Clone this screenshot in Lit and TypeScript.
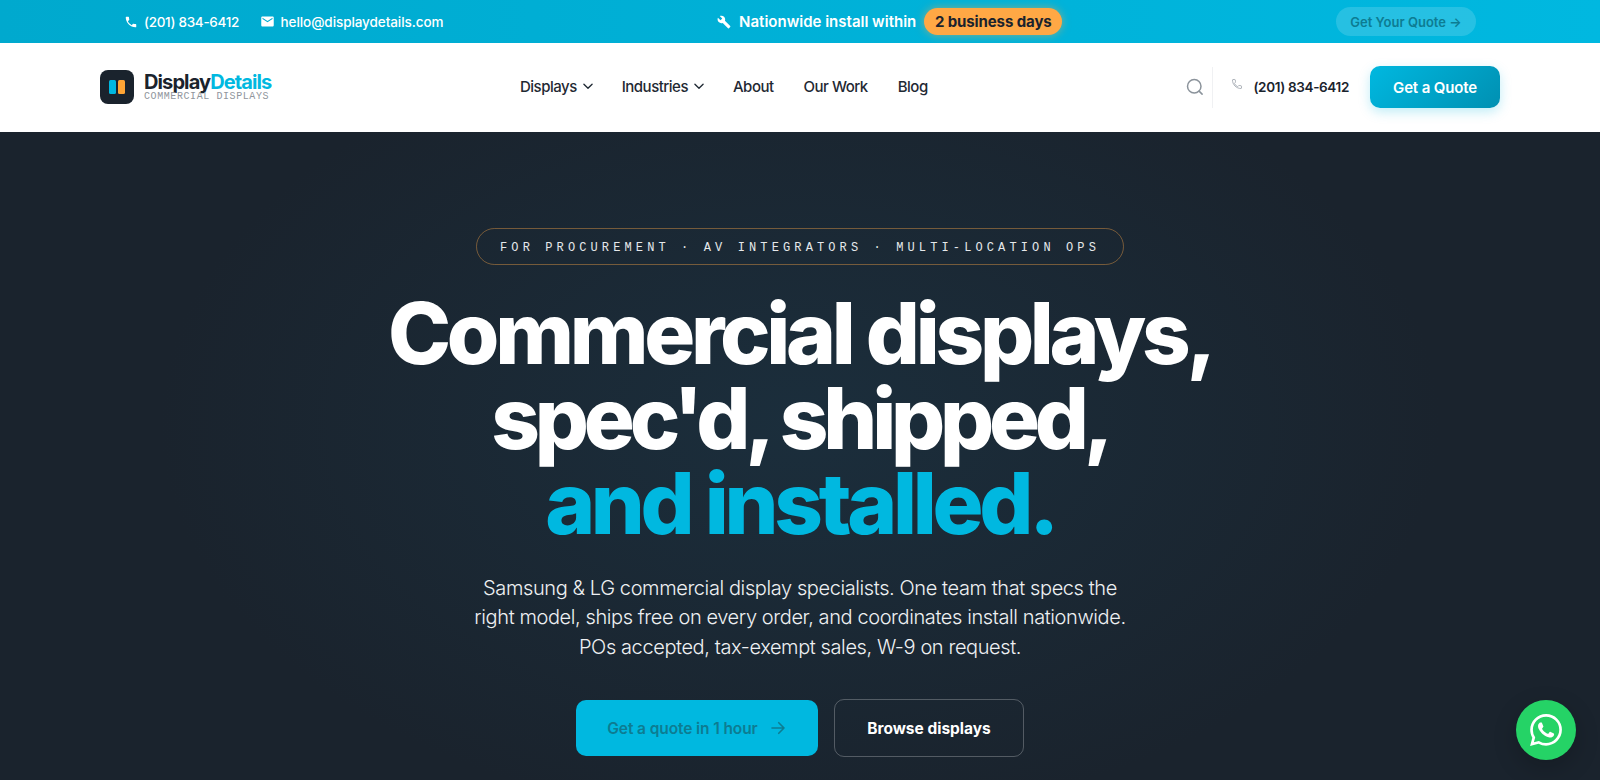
import { LitElement, html, css, svg } from "lit";
import { customElement } from "lit/decorators.js";

const PHONE = svg`<path d="M6.62 10.79c1.44 2.83 3.76 5.14 6.59 6.59l2.2-2.2c.27-.27.67-.36 1.02-.24 1.12.37 2.33.57 3.57.57.55 0 1 .45 1 1V20c0 .55-.45 1-1 1-9.39 0-17-7.61-17-17 0-.55.45-1 1-1h3.5c.55 0 1 .45 1 1 0 1.25.2 2.45.57 3.57.11.35.03.74-.25 1.02l-2.2 2.2z"/>`;
const MAIL = svg`<path d="M20 4H4c-1.1 0-1.99.9-1.99 2L2 18c0 1.1.9 2 2 2h16c1.1 0 2-.9 2-2V6c0-1.1-.9-2-2-2zm0 4l-8 5-8-5V6l8 5 8-5v2z"/>`;
const WRENCH = svg`<path d="M22.7 19l-9.1-9.1c.9-2.3.4-5-1.5-6.9-2-2-5-2.4-7.4-1.3L9 6 6 9 1.6 4.7C.4 7.1.9 10.1 2.9 12.1c1.9 1.9 4.6 2.4 6.9 1.5l9.1 9.1c.4.4 1 .4 1.4 0l2.3-2.3c.5-.4.5-1.1.1-1.4z"/>`;
const WA = svg`<path d="M17.472 14.382c-.297-.149-1.758-.867-2.03-.967-.273-.099-.471-.148-.67.15-.197.297-.767.966-.94 1.164-.173.199-.347.223-.644.075-.297-.15-1.255-.463-2.39-1.475-.883-.788-1.48-1.761-1.653-2.059-.173-.297-.018-.458.13-.606.134-.133.298-.347.446-.52.149-.174.198-.298.298-.497.099-.198.05-.371-.025-.52-.075-.149-.669-1.612-.916-2.207-.242-.579-.487-.5-.669-.51-.173-.008-.371-.01-.57-.01-.198 0-.52.074-.792.372-.272.297-1.04 1.016-1.04 2.479 0 1.462 1.065 2.875 1.213 3.074.149.198 2.096 3.2 5.077 4.487.709.306 1.262.489 1.694.625.712.227 1.36.195 1.871.118.571-.085 1.758-.719 2.006-1.413.248-.694.248-1.289.173-1.413-.074-.124-.272-.198-.57-.347m-5.421 7.403h-.004a9.87 9.87 0 01-5.031-1.378l-.361-.214-3.741.982.998-3.648-.235-.374a9.86 9.86 0 01-1.51-5.26c.001-5.45 4.436-9.884 9.888-9.884 2.64 0 5.122 1.03 6.988 2.898a9.825 9.825 0 012.893 6.994c-.003 5.45-4.437 9.884-9.885 9.884m8.413-18.297A11.815 11.815 0 0012.05 0C5.495 0 .16 5.335.157 11.892c0 2.096.547 4.142 1.588 5.945L.057 24l6.305-1.654a11.882 11.882 0 005.683 1.448h.005c6.554 0 11.89-5.335 11.893-11.893a11.821 11.821 0 00-3.48-8.413z"/>`;

const icon = (p: unknown, cls: string) => html`<svg class=${cls} viewBox="0 0 24 24" fill="currentColor">${p}</svg>`;
const chevron = html`<svg class="chev" viewBox="0 0 24 24" fill="none" stroke="currentColor" stroke-width="2.3" stroke-linecap="round" stroke-linejoin="round"><path d="M5 9l7 7 7-7"/></svg>`;

@customElement("app-root")
export class AppRoot extends LitElement {
  static styles = css`
    :host {
      display: block;
      width: 100%;
      height: 780px;
      overflow: hidden;
      position: relative;
      font-family: Inter, "Liberation Sans", sans-serif;
      background: #1a232d;
    }
    a { text-decoration: none; color: inherit; }

    .topbar {
      height: 43px;
      box-sizing: border-box;
      padding: 0 124px;
      display: flex;
      align-items: center;
      justify-content: space-between;
      background: linear-gradient(90deg, #00a9ce, #00b8e0);
      color: #fff;
      font-size: 13.5px;
      font-weight: 500;
    }
    .contacts { display: flex; gap: 21px; align-items: center; }
    .contact { display: flex; align-items: center; gap: 6px; letter-spacing: -0.3px; }
    .contact svg { width: 14px; height: 14px; }
    .contact.mail { gap: 5.5px; letter-spacing: -0.08px; }
    .contact.mail svg { width: 15px; height: 15px; }
    .promo { display: flex; align-items: center; font-size: 15px; font-weight: 600; }
    .promo svg { width: 14px; height: 14px; margin-right: 8px; }
    .badge {
      margin-left: 8px;
      height: 27px;
      width: 138px;
      box-sizing: border-box;
      display: flex;
      align-items: center;
      justify-content: center;
      border-radius: 14px;
      background: #ffa845;
      color: #1a232d;
      font-weight: 700;
      letter-spacing: -0.1px;
      box-shadow: 0 0 8px rgba(255, 168, 69, 0.55);
    }
    .topcta {
      width: 140px;
      height: 29px;
      display: flex;
      align-items: center;
      justify-content: center;
      border-radius: 15px;
      background: rgba(255, 255, 255, 0.15);
      color: #0d7c92;
      font-size: 13px;
      font-weight: 600;
    }

    .nav {
      height: 89px;
      box-sizing: border-box;
      padding: 0 100px 1px;
      background: #fff;
      display: flex;
      align-items: center;
      color: #1a232d;
    }
    .logo { display: flex; align-items: center; gap: 10px; width: 172px; }
    .mark {
      width: 34px;
      height: 34px;
      flex: none;
      border-radius: 8px;
      background: #1a232d;
      display: flex;
      align-items: center;
      justify-content: center;
      gap: 2px;
    }
    .mark i { width: 7px; height: 14px; border-radius: 1.5px; background: #00b8e0; }
    .mark i + i { background: #ffa535; }
    .wordmark { display: flex; flex-direction: column; margin-top: -1px; }
    .name { font-size: 20px; line-height: 20px; font-weight: 700; letter-spacing: -0.89px; white-space: nowrap; }
    .name span { color: #00b8e0; }
    .sub {
      font-family: "Liberation Mono", monospace;
      font-size: 10px;
      line-height: 9px;
      letter-spacing: 0.58px;
      color: #8f959c;
      white-space: nowrap;
    }
    .links { display: flex; align-items: center; gap: 30px; margin: -2px 0 0 248px; font-size: 15px; font-weight: 500; color: #1f2933; }
    .link { display: flex; align-items: center; gap: 4px; letter-spacing: -0.5px; }
    .chev { width: 14px; height: 14px; margin-right: -3px; }
    .right { margin-left: auto; display: flex; align-items: center; }
    .search { width: 18px; height: 18px; color: #8b939b; display: block; }
    .divider { width: 1px; height: 41px; background: #f0f1f3; margin: 0 18.5px 0 8px; }
    .navphone { display: flex; align-items: center; gap: 10px; font-size: 13.5px; font-weight: 600; letter-spacing: -0.35px; }
    .navphone svg { width: 12px; height: 12px; color: #9aa1a9; margin-top: -6px; }
    .quote {
      margin-left: 21px;
      width: 130px;
      height: 42px;
      display: flex;
      align-items: center;
      justify-content: center;
      border-radius: 10px;
      color: #fff;
      font-size: 15px;
      font-weight: 600;
      letter-spacing: -0.15px;
      background: linear-gradient(135deg, #00b8e0, #0090b2);
      box-shadow: 0 4px 12px rgba(0, 184, 224, 0.25);
    }

    .hero {
      height: 648px;
      box-sizing: border-box;
      padding-top: 96px;
      background: radial-gradient(ellipse 640px 400px at 50% 45%, #1b2e3c 0%, #1a232d 100%);
      display: flex;
      flex-direction: column;
      align-items: center;
      color: #fff;
    }
    .eyebrow {
      box-sizing: border-box;
      width: 648px;
      height: 37px;
      padding-top: 2px;
      display: flex;
      align-items: center;
      justify-content: center;
      border: 1px solid rgba(255, 168, 69, 0.4);
      border-radius: 19px;
      font-family: "Liberation Mono", monospace;
      font-size: 12px;
      letter-spacing: 4.12px;
      color: #e6e9eb;
      white-space: pre;
    }
    h1 {
      margin: 25.5px 0 0;
      font-size: 85px;
      line-height: 85px;
      font-weight: 800;
      letter-spacing: -4.3px;
      text-align: center;
      white-space: nowrap;
    }
    h1 span { color: #00b8e0; display: block; }
    h1 div { display: block; }
    h1 .tight { letter-spacing: -5.2px; }
    .lede {
      margin: 28px 0 0;
      font-size: 20px;
      line-height: 29.5px;
      font-weight: 300;
      letter-spacing: -0.4px;
      color: #eef0f2;
      text-align: center;
      white-space: nowrap;
    }
    .actions { display: flex; gap: 16px; align-items: center; margin-top: 37px; }
    .primary {
      width: 242px;
      height: 56px;
      display: flex;
      align-items: center;
      justify-content: center;
      gap: 11px;
      border-radius: 10px;
      background: #00b8e0;
      color: #0d7c92;
      font-size: 15.5px;
      font-weight: 600;
      letter-spacing: -0.1px;
    }
    .primary svg { width: 18px; height: 18px; }
    .secondary {
      box-sizing: border-box;
      width: 190px;
      height: 58px;
      display: flex;
      align-items: center;
      justify-content: center;
      border: 1px solid rgba(255, 255, 255, 0.25);
      border-radius: 10px;
      color: #fff;
      font-size: 15.5px;
      font-weight: 700;
    }
    .wa {
      position: absolute;
      left: 1516px;
      top: 700px;
      width: 60px;
      height: 60px;
      border-radius: 50%;
      background: #25d366;
      color: #fff;
      display: flex;
      align-items: center;
      justify-content: center;
      box-shadow: 0 8px 24px rgba(0, 0, 0, 0.2);
    }
    .wa svg { width: 32px; height: 32px; }
  `;

  render() {
    return html`
      <div class="topbar">
        <div class="contacts">
          <a class="contact">${icon(PHONE, "")}(201) 834-6412</a>
          <a class="contact mail">${icon(MAIL, "")}hello@displaydetails.com</a>
        </div>
        <div class="promo">
          ${icon(WRENCH, "")}Nationwide install within
          <span class="badge">2 business days</span>
        </div>
        <a class="topcta">Get Your Quote →</a>
      </div>
      <div class="nav">
        <a class="logo">
          <span class="mark"><i></i><i></i></span>
          <span class="wordmark">
            <span class="name">Display<span>Details</span></span>
            <span class="sub">COMMERCIAL DISPLAYS</span>
          </span>
        </a>
        <div class="links">
          <a class="link">Displays ${chevron}</a>
          <a class="link">Industries ${chevron}</a>
          <a class="link">About</a>
          <a class="link">Our Work</a>
          <a class="link">Blog</a>
        </div>
        <div class="right">
          <svg class="search" viewBox="0 0 24 24" fill="none" stroke="currentColor" stroke-width="2" stroke-linecap="round"><circle cx="11" cy="11" r="9"/><path d="M21.5 21.5L17.5 17.5"/></svg>
          <span class="divider"></span>
          <a class="navphone"><svg viewBox="0 0 24 24" fill="none" stroke="currentColor" stroke-width="1.6"><path d="M6.62 10.79c1.44 2.83 3.76 5.14 6.59 6.59l2.2-2.2c.27-.27.67-.36 1.02-.24 1.12.37 2.33.57 3.57.57.55 0 1 .45 1 1V20c0 .55-.45 1-1 1-9.39 0-17-7.61-17-17 0-.55.45-1 1-1h3.5c.55 0 1 .45 1 1 0 1.25.2 2.45.57 3.57.11.35.03.74-.25 1.02l-2.2 2.2z"/></svg>(201) 834-6412</a>
          <a class="quote">Get a Quote</a>
        </div>
      </div>
      <div class="hero">
        <div class="eyebrow">FOR PROCUREMENT · AV INTEGRATORS · MULTI-LOCATION OPS</div>
        <h1>
          <div>Commercial displays,</div>
          <div class="tight">spec'd, shipped,</div>
          <span>and installed.</span>
        </h1>
        <p class="lede">
          Samsung &amp; LG commercial display specialists. One team that specs the<br />
          right model, ships free on every order, and coordinates install nationwide.<br />
          POs accepted, tax-exempt sales, W-9 on request.
        </p>
        <div class="actions">
          <a class="primary">Get a quote in 1 hour
            <svg viewBox="0 0 24 24" fill="none" stroke="currentColor" stroke-width="2.2" stroke-linecap="round" stroke-linejoin="round"><path d="M4 12h16M13 5l7 7-7 7"/></svg>
          </a>
          <a class="secondary">Browse displays</a>
        </div>
      </div>
      <a class="wa">${icon(WA, "")}</a>
    `;
  }
}
